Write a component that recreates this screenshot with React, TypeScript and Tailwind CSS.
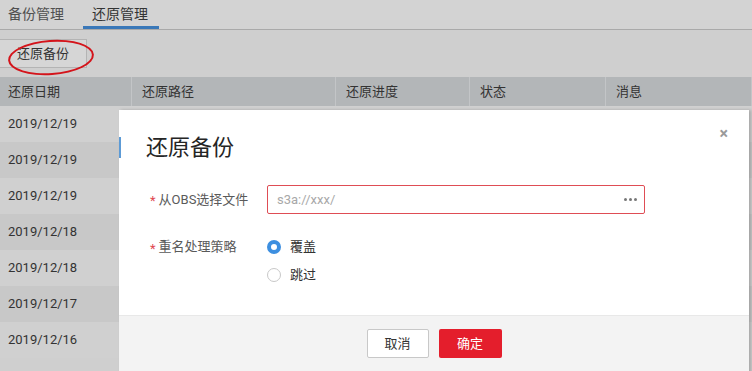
const dates = [
  "2019/12/19",
  "2019/12/19",
  "2019/12/19",
  "2019/12/18",
  "2019/12/18",
  "2019/12/17",
  "2019/12/16",
];

const cols = [
  { title: "还原日期", w: "w-[132px] pl-[8px]" },
  { title: "还原路径", w: "w-[204px] pl-[10px]" },
  { title: "还原进度", w: "w-[134px] pl-[10px]" },
  { title: "状态", w: "w-[136px] pl-[10px]" },
  { title: "消息", w: "flex-1 pl-[10px]" },
];

function RestoreDialog() {
  return (
    <div className="absolute left-[119px] top-[110px] w-[630px] h-[280px] bg-white shadow-[2px_0_3px_rgba(0,0,0,0.2)]">
      <div className="absolute left-0 top-[27px] w-[2px] h-[21px] bg-[#5d9bd6]" />
      <button className="absolute right-[21px] top-[16px] text-[#9a9a9a] text-[16px] leading-none font-bold">
        ×
      </button>

      <div className="pl-[27px] pt-[24px]">
        <h2 className="text-[22px] leading-[28px] text-[#252525]">还原备份</h2>
      </div>

      <div className="mt-[23px] flex items-center pl-[31px]">
        <div className="w-[117px] flex items-center text-[13px] text-[#5a5a5a]">
          <span className="text-[#e0474f] mr-[3px] mt-[3px]">*</span>
          <span>从OBS选择文件</span>
        </div>
        <div className="w-[378px] h-[29px] border border-[#df4d55] rounded-[2px] flex items-center px-[9px] justify-between">
          <span className="text-[13px] text-[#a8a8a8]">s3a://xxx/</span>
          <span className="flex gap-[2px] mr-[-2px]">
            <span className="w-[3px] h-[3px] rounded-full bg-[#777]" />
            <span className="w-[3px] h-[3px] rounded-full bg-[#777]" />
            <span className="w-[3px] h-[3px] rounded-full bg-[#777]" />
          </span>
        </div>
      </div>

      <div className="mt-[19px] flex pl-[31px]">
        <div className="w-[117px] flex items-center h-[28px] text-[13px] text-[#5a5a5a]">
          <span className="text-[#e0474f] mr-[3px] mt-[3px]">*</span>
          <span>重名处理策略</span>
        </div>
        <div className="flex flex-col">
          <label className="flex items-center h-[28px] text-[13px] text-[#333]">
            <span className="w-[14px] h-[14px] rounded-full border-[4px] border-[#3d8fe0] bg-white mr-[9px]" />
            覆盖
          </label>
          <label className="flex items-center h-[28px] text-[13px] text-[#333]">
            <span className="w-[14px] h-[14px] rounded-full border border-[#c8c8c8] bg-white mr-[9px]" />
            跳过
          </label>
        </div>
      </div>

      <div className="absolute left-0 right-0 top-[205px] bottom-0 bg-[#f3f3f3] border-t border-[#e8e8e8] flex justify-center pt-[13px] gap-[10px]">
        <button className="w-[62px] h-[29px] bg-white border border-[#c8c8c8] rounded-[2px] text-[13px] text-[#333]">
          取消
        </button>
        <button className="w-[63px] h-[29px] bg-[#e41e2c] rounded-[2px] text-[13px] text-white">
          确定
        </button>
      </div>
    </div>
  );
}

export default function App() {
  return (
    <div
      className="relative w-[752px] h-[371px] overflow-hidden bg-[#cfcfcf]"
      style={{ fontFamily: 'Roboto, "Noto Sans CJK SC", sans-serif' }}
    >
      {/* Tabs */}
      <div className="h-[30px] flex border-b border-[#a9a9a9] bg-[#d3d3d3] text-[14px]">
        <div className="pl-[8px] pr-[19px] flex items-center text-[#505050]">备份管理</div>
        <div className="pl-[9px] pr-[11px] flex items-center text-[#333] border-b-[3px] border-[#3a78b8] pt-[3px]">
          还原管理
        </div>
      </div>

      {/* Toolbar */}
      <div className="h-[47px] pt-[9px] relative">
        <button className="w-[87px] h-[29px] border border-[#b4b4b4] border-l-0 bg-[#d6d6d6] text-[13px] text-[#333]">
          还原备份
        </button>
        <div className="absolute left-[8px] top-[10px] w-[86px] h-[35px] rounded-[50%] border-[2px] border-[#d4141b] -rotate-[4deg]" />
      </div>

      {/* Table */}
      <div className="flex h-[29px] bg-[#b3b6b8] text-[13px] text-[#333]">
        {cols.map((c) => (
          <div key={c.title} className={`${c.w} border-r border-[#c3c5c7] flex items-center`}>
            {c.title}
          </div>
        ))}
      </div>
      {dates.map((d, i) => (
        <div
          key={i}
          className={`h-[36px] flex items-center pl-[8px] text-[13px] text-[#333] ${
            i % 2 === 0 ? "bg-[#d0d0d0]" : "bg-[#c8c8c8]"
          }`}
        >
          {d}
        </div>
      ))}

      <RestoreDialog />
    </div>
  );
}
